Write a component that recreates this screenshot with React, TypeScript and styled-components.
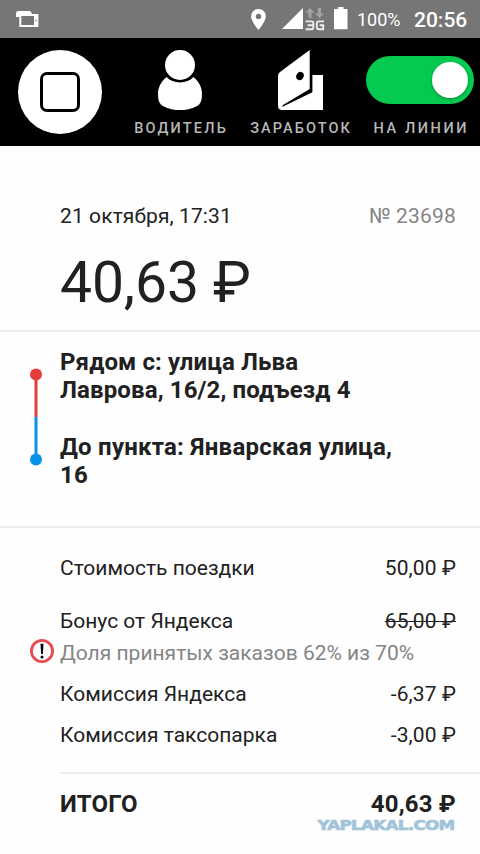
import React from "react";
import styled, { createGlobalStyle } from "styled-components";

const GlobalStyle = createGlobalStyle`
  * { box-sizing: border-box; }
  body { margin: 0; background: #fff; font-family: Roboto, "Noto Sans", sans-serif; color: #212121; }
  svg { display: block; flex: none; }
`;

const Screen = styled.main`
  width: 480px;
  height: 854px;
  display: flex;
  flex-direction: column;
  background: #fefefe;
  overflow: hidden;
`;

const StatusBar = styled.div`
  height: 38px;
  flex: none;
  display: flex;
  align-items: center;
  justify-content: space-between;
  padding: 0 12px 0 16px;
  background: #767676;
  color: #fff;
`;

const StatusGroup = styled.div`
  display: flex;
  align-items: center;
`;

const BatteryText = styled.span`
  width: 43px;
  margin: 2px 14px 0 9px;
  font-size: 18px;
  line-height: 24px;
  white-space: nowrap;
`;

const Clock = styled.span`
  width: 54px;
  margin-top: 2px;
  font-size: 21px;
  line-height: 24px;
  font-weight: 500;
  white-space: nowrap;
`;

const NavBar = styled.nav`
  height: 108px;
  flex: none;
  display: grid;
  grid-template-columns: repeat(4, 120px);
  background: #000;
`;

const NavItem = styled.div`
  display: flex;
  flex-direction: column;
  align-items: center;
  padding-top: 12px;
`;

const NavGraphic = styled.div`
  height: 60px;
  display: flex;
  align-items: center;
`;

const NavLabel = styled.span<{ $spacing: number }>`
  margin-top: 9px;
  padding-left: ${(p) => p.$spacing}px;
  font-size: 14.5px;
  line-height: 20px;
  font-weight: 500;
  letter-spacing: ${(p) => p.$spacing}px;
  color: #b8b8b8;
  white-space: nowrap;
`;

const StopButton = styled.button`
  width: 84px;
  height: 84px;
  padding: 0;
  border: 0;
  border-radius: 50%;
  background: #fff;
  display: grid;
  place-items: center;
`;

const StopSquare = styled.span`
  width: 40px;
  height: 40px;
  border: 3px solid #000;
  border-radius: 7px;
`;

const Toggle = styled.div`
  width: 108px;
  height: 48px;
  padding: 6px;
  border-radius: 24px;
  background: #05ca52;
  display: flex;
  justify-content: flex-end;
`;

const Knob = styled.span`
  width: 36px;
  height: 36px;
  border-radius: 50%;
  background: #fff;
  box-shadow: 0 1px 3px rgba(0, 0, 0, 0.35);
`;

const Summary = styled.section`
  height: 186px;
  flex: none;
  padding: 58px 24px 0 60px;
  border-bottom: 2px solid #ececec;
`;

const SummaryHead = styled.div`
  display: flex;
  justify-content: space-between;
  font-size: 21px;
  line-height: 24px;
  letter-spacing: 0.1px;
`;

const OrderNumber = styled.span`
  color: #858585;
  letter-spacing: 0.2px;
`;

const Price = styled.div`
  margin-top: 21px;
  font-size: 57px;
  line-height: 68px;
  letter-spacing: -0.1px;
`;

const RouteSection = styled.section`
  height: 196px;
  flex: none;
  display: grid;
  grid-template-columns: 60px 350px;
  padding-top: 16px;
  border-bottom: 2px solid #ececee;
`;

const Rail = styled.div`
  padding: 20px 0 0 30px;
`;

const Stops = styled.div`
  display: flex;
  flex-direction: column;
  gap: 29px;
`;

const Stop = styled.p<{ $tracking: number }>`
  margin: 0;
  font-size: 24px;
  line-height: 28px;
  font-weight: 700;
  letter-spacing: ${(p) => p.$tracking}px;
`;

const Fare = styled.section`
  padding-top: 28px;
`;

const Row = styled.div<{ $gap: number }>`
  display: grid;
  grid-template-columns: 60px 1fr auto;
  height: 24px;
  margin-bottom: ${(p) => p.$gap}px;
  padding-right: 24px;
  font-size: 21px;
  line-height: 24px;
  white-space: nowrap;
`;

const Label = styled.span<{ $muted?: boolean }>`
  grid-column: 2;
  color: ${(p) => (p.$muted ? "#858585" : "inherit")};
`;

const Amount = styled.span<{ $struck?: boolean }>`
  text-decoration: ${(p) => (p.$struck ? "line-through" : "none")};
  text-decoration-thickness: 1px;
  letter-spacing: 0.1px;
`;

const WarningSlot = styled.span`
  padding-left: 30px;
  margin-top: -2px;
`;

const Total = styled.div`
  position: relative;
  display: flex;
  justify-content: space-between;
  margin-left: 60px;
  padding: 16px 24px 0 0;
  border-top: 2px solid #ececec;
  font-size: 24px;
  line-height: 28px;
  font-weight: 700;
  letter-spacing: 0.2px;
`;

const Watermark = styled.svg`
  position: absolute;
  right: 24px;
  top: 44px;
`;

const fareRows = [
  { label: "Стоимость поездки", amount: "50,00 ₽", gap: 29 },
  { label: "Бонус от Яндекса", amount: "65,00 ₽", gap: 8, struck: true },
  { label: "Доля принятых заказов 62% из 70%", gap: 17, warning: true },
  { label: "Комиссия Яндекса", amount: "-6,37 ₽", gap: 17 },
  { label: "Комиссия таксопарка", amount: "-3,00 ₽", gap: 25 },
];

const ScreenCastIcon = () => (
  <svg width="23" height="17" viewBox="0 0 23 17">
    <path fill="#fff" d="M2 0h11.500q2 0 2.300 3h6.600v13H3.300V6H0V2.500Q0 .3 2 0z" />
    <path fill="#767676" d="M5.300 5h12.700v9h-12.700z" />
    <circle cx="20" cy="9.500" r=".8" fill="#767676" />
  </svg>
);

const StatusIcons = () => (
  <svg width="98" height="38" viewBox="250 0 98 38">
    <path fill="#fff" fillRule="evenodd" d="M258.500 9a7.300 7.300 0 0 1 7.400 7.300c0 5-7.400 13.700-7.400 13.700s-7.400-8.700-7.400-13.700A7.300 7.300 0 0 1 258.500 9zm0 4.700a2.700 2.700 0 1 0 0 5.400a2.700 2.700 0 0 0 0-5.400z" />
    <path fill="#fff" d="M303 8v21h-21z" />
    <path fill="#a3a3a3" d="M310 8l4.500 4.500h-3v5.500h-3v-5.500h-3zM319.500 18l-4.500-4.500h3V8h3v5.500h3z" />
    <path fill="none" stroke="#ededed" strokeWidth="1.900" d="M305.700 21.400h6q1.600 0 1.600 1.500v4.700q0 1.600-1.600 1.600h-6M307.500 25.300h5.500M324 21.400h-5q-2.200 0-2.200 2v3.800q0 2 2.200 2h4.200v-3.900h-3.500" />
    <path fill="#fff" d="M338 7h5.500v2h4v20.300h-13.500V9h4z" />
  </svg>
);

const DriverIcon = () => (
  <svg width="44" height="60" viewBox="0 0 44 60">
    <path fill="#fff" d="M8.500 27C3 31.500 0 37.500 0 44c0 5 .8 8.500 3 10.500C7 58 14 60 22 60s15-2 19-5.500c2.200-2 3-5.500 3-10.500c0-6.500-3-12.500-8.500-17C32 30.800 27.500 32.400 22 32.400S12 30.800 8.500 27z" />
    <circle cx="22" cy="15" r="15" fill="#fff" />
  </svg>
);

const WalletIcon = () => (
  <svg width="45" height="60" viewBox="0 0 45 60">
    <path fill="#fff" d="M31.700 0v25H45v35H4q-4 0-4-4V26q0-2.500 2-4z" />
    <path d="M31.700 25h2.700v17.300L4 57l1-2l26.700-16z" />
    <ellipse cx="22" cy="26" rx="3.600" ry="4.300" transform="rotate(28 22 26)" />
  </svg>
);

const RouteLine = () => (
  <svg width="12" height="98" viewBox="0 0 12 98">
    <path stroke="#e23d3a" strokeWidth="3" d="M6 6v43" />
    <path stroke="#0993e8" strokeWidth="3" d="M6 49v43" />
    <circle cx="6" cy="6.500" r="6" fill="#e23d3a" />
    <circle cx="6" cy="91.500" r="6" fill="#0993e8" />
  </svg>
);

const WarningIcon = () => (
  <svg width="24" height="24" viewBox="0 0 24 24">
    <circle cx="12" cy="12" r="10.600" fill="none" stroke="#e84a50" strokeWidth="2.800" />
    <path d="M10.500 4.800h3l-.6 10.200h-1.800z" />
    <circle cx="12" cy="18" r="1.500" />
  </svg>
);

export default function App() {
  return (
    <>
      <GlobalStyle />
      <Screen>
        <StatusBar>
          <ScreenCastIcon />
          <StatusGroup>
            <StatusIcons />
            <BatteryText>100%</BatteryText>
            <Clock>20:56</Clock>
          </StatusGroup>
        </StatusBar>
        <NavBar>
          <NavItem>
            <StopButton aria-label="Стоп">
              <StopSquare />
            </StopButton>
          </NavItem>
          <NavItem>
            <NavGraphic><DriverIcon /></NavGraphic>
            <NavLabel $spacing={2.2}>ВОДИТЕЛЬ</NavLabel>
          </NavItem>
          <NavItem>
            <NavGraphic><WalletIcon /></NavGraphic>
            <NavLabel $spacing={2.1}>ЗАРАБОТОК</NavLabel>
          </NavItem>
          <NavItem>
            <NavGraphic><Toggle><Knob /></Toggle></NavGraphic>
            <NavLabel $spacing={2.6}>НА ЛИНИИ</NavLabel>
          </NavItem>
        </NavBar>
        <Summary>
          <SummaryHead>
            <span>21 октября, 17:31</span>
            <OrderNumber>№ 23698</OrderNumber>
          </SummaryHead>
          <Price>40,63 ₽</Price>
        </Summary>
        <RouteSection>
          <Rail><RouteLine /></Rail>
          <Stops>
            <Stop $tracking={0.12}>Рядом с: улица Льва<br />Лаврова, 16/2, подъезд 4</Stop>
            <Stop $tracking={0.23}>До пункта: Январская улица,<br />16</Stop>
          </Stops>
        </RouteSection>
        <Fare>
          {fareRows.map((row) => (
            <Row key={row.label} $gap={row.gap}>
              {row.warning && <WarningSlot><WarningIcon /></WarningSlot>}
              <Label $muted={row.warning}>{row.label}</Label>
              {row.amount && <Amount $struck={row.struck}>{row.amount}</Amount>}
            </Row>
          ))}
          <Total>
            <span>ИТОГО</span>
            <span>40,63 ₽</span>
            <Watermark width="140" height="16" viewBox="0 0 140 16">
              <text x="1.500" y="12" textLength="137" lengthAdjust="spacingAndGlyphs" fontFamily="DejaVu Sans" fontWeight="700" fontSize="14.500" letterSpacing="-0.6" fill="#a2c4da" stroke="#a2c4da" strokeWidth=".7">YAPLAKAL.COM</text>
            </Watermark>
          </Total>
        </Fare>
      </Screen>
    </>
  );
}
